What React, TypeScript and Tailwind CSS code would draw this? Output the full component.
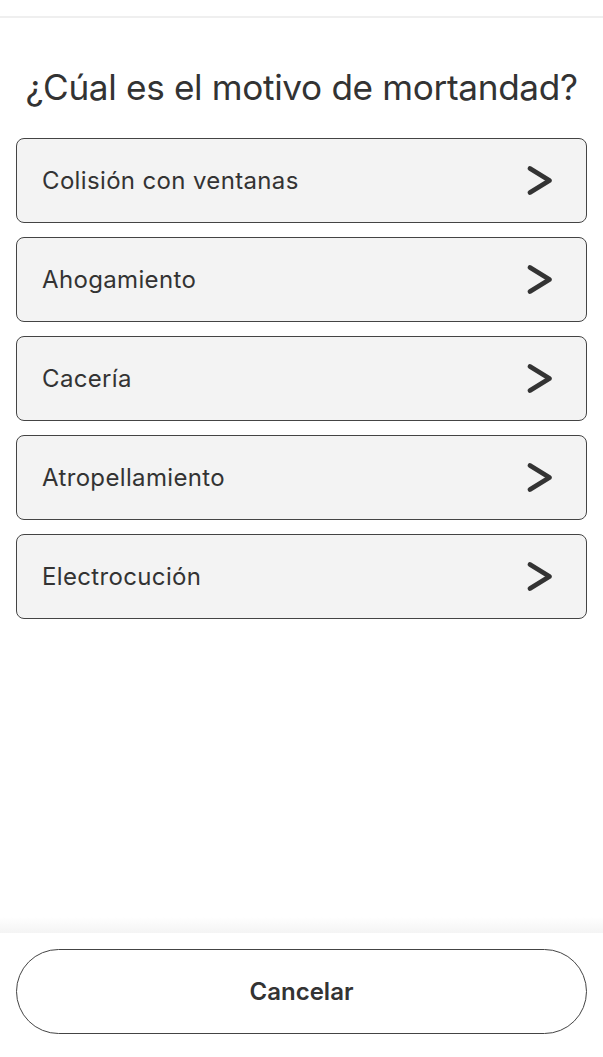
import React from "react";

const items = [
  "Colisión con ventanas",
  "Ahogamiento",
  "Cacería",
  "Atropellamiento",
  "Electrocución",
];

function Chevron() {
  return (
    <svg width="28" height="34" viewBox="0 0 28 34" fill="none">
      <path
        d="M4 4.5 L23.5 16.5 L4 28.5"
        stroke="#333333"
        strokeWidth="4.8"
        strokeLinecap="round"
        strokeLinejoin="round"
      />
    </svg>
  );
}

export default function App() {
  return (
    <div
      className="w-[603px] h-[1057px] bg-white flex flex-col text-[#333333]"
      style={{ fontFamily: "Inter, 'Noto Sans', sans-serif" }}
    >
      <div className="h-[16px] shrink-0" />
      <div className="h-[2px] bg-[#efefef] shrink-0" />
      <div className="flex-1 flex flex-col px-4">
        <h1 className="mt-[49px] text-center text-[35.2px] leading-[40px] tracking-[-0.35px] text-[#333333] font-normal whitespace-nowrap">
          ¿Cúal es el motivo de mortandad?
        </h1>
        <div className="mt-[31px] flex flex-col gap-[14px]">
          {items.map((it) => (
            <div
              key={it}
              className="h-[85px] rounded-[8px] border-[1.5px] border-[#444444] bg-[#f3f3f3] flex items-center justify-between pl-[25px] pr-[32px]"
            >
              <span className="text-[24px] tracking-[0.35px] text-[#333333]">{it}</span>
              <Chevron />
            </div>
          ))}
        </div>
      </div>
      <div className="h-[16px] bg-gradient-to-b from-white to-[#f4f4f4] shrink-0" />
      <div className="px-4 pt-[16px] pb-[23px] bg-white shrink-0">
        <button className="w-full h-[85px] rounded-full border-[1.5px] border-[#444444] bg-white flex items-center justify-center text-[24px] font-semibold text-[#333333]">
          Cancelar
        </button>
      </div>
    </div>
  );
}
